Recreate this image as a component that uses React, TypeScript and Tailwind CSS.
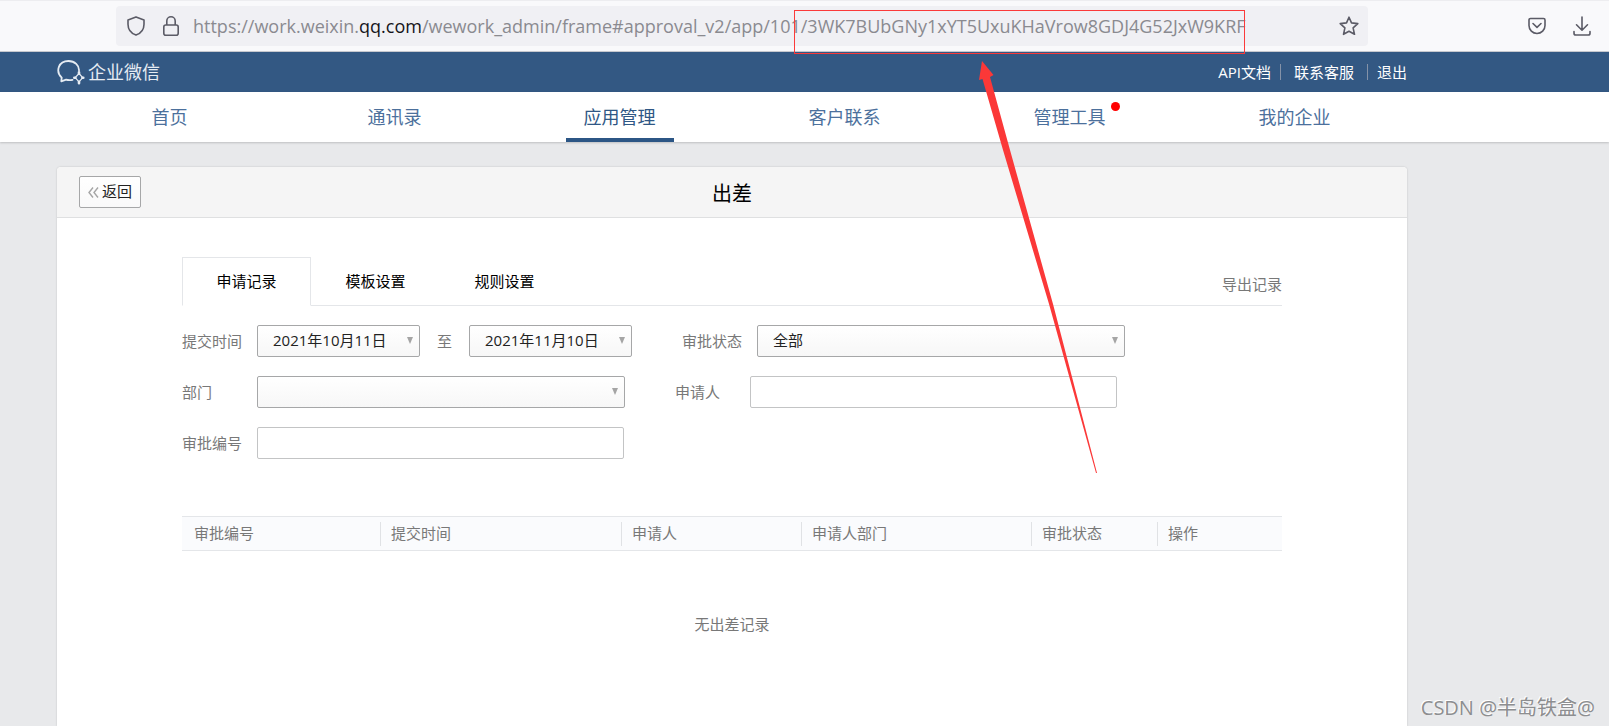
import { useState } from 'react';
import type { ReactNode } from 'react';

interface NavItem {
  label: string;
  active?: boolean;
  dot?: boolean;
}

const NAV_ITEMS: NavItem[] = [
  { label: '首页' },
  { label: '通讯录' },
  { label: '应用管理', active: true },
  { label: '客户联系' },
  { label: '管理工具', dot: true },
  { label: '我的企业' },
];

const TABS = ['申请记录', '模板设置', '规则设置'];

const COLUMNS = [
  { label: '审批编号', width: 'w-[198px]' },
  { label: '提交时间', width: 'w-[241px]' },
  { label: '申请人', width: 'w-[180px]' },
  { label: '申请人部门', width: 'w-[230px]' },
  { label: '审批状态', width: 'w-[126px]' },
  { label: '操作', width: '' },
];

function BrowserBar() {
  return (
    <div className="flex h-[52px] items-center border-t border-b border-t-[#ededf0] border-b-[#c6c8ce] bg-[#f9f9fb] pr-[18px] pl-[116px] text-[#5b5b66]">
      <div className="flex h-10 min-w-0 flex-1 items-center rounded bg-[#f0f0f4] pr-[9px] pl-[11px]">
        <svg className="h-5 w-[18px] shrink-0" viewBox="0 0 18 20" fill="none" stroke="currentColor" strokeWidth="1.6" strokeLinejoin="round">
          <path d="M9 .9 17 3.900v4.300c0 4.600-2.800 9-8 10.900-5.200-1.900-8-6.300-8-10.900V3.900z" />
        </svg>
        <svg className="ml-[18px] h-5 w-4 shrink-0" viewBox="0 0 16 20" fill="none" stroke="currentColor" strokeWidth="1.6">
          <rect x=".8" y="9" width="14.400" height="10.200" rx="2" />
          <path d="M3.800 9V5a4.200 4.200 0 0 1 8.400 0v4" />
        </svg>
        <div
          role="textbox"
          aria-label="地址"
          tabIndex={0}
          className="ml-[14px] min-w-0 flex-1 text-[18px] leading-8 whitespace-nowrap text-[#8a8a90]"
        >
          https://work.weixin.<span className="text-[#15141a]">qq.com</span>
          /wework_admin/frame#approval_v2/app/101/3WK7BUbGNy1xYT5UxuKHaVrow8GDJ4G52JxW9KRF
        </div>
        <button type="button" aria-label="收藏">
          <svg className="h-5 w-5" viewBox="0 0 20 20" fill="none" stroke="currentColor" strokeWidth="1.6" strokeLinejoin="round">
            <path d="m10 1.200 2.500 5.700 6.300.7-4.700 4.200 1.400 6.500L10 15.200l-5.500 3.100 1.400-6.500L1.200 7.600l6.300-.7z" />
          </svg>
        </button>
      </div>
      <button type="button" aria-label="Pocket" className="ml-40">
        <svg className="h-[18px] w-[18px]" viewBox="0 0 18 18" fill="none" stroke="currentColor" strokeWidth="1.6" strokeLinecap="round" strokeLinejoin="round">
          <path d="M2.500 1.500h13a1.500 1.500 0 0 1 1.500 1.500v5.500a8 8 0 0 1-16 0V3a1.500 1.500 0 0 1 1.500-1.500z" />
          <path d="m5 6.500 4 3.800 4-3.800" />
        </svg>
      </button>
      <button type="button" aria-label="下载" className="ml-[27px]">
        <svg className="h-5 w-[18px]" viewBox="0 0 18 20" fill="none" stroke="currentColor" strokeWidth="1.6" strokeLinecap="round" strokeLinejoin="round">
          <path d="M9 1v13M3.500 8.800 9 14.200l5.500-5.400M1 15.500v1.700A1.800 1.800 0 0 0 2.800 19h12.400a1.800 1.800 0 0 0 1.800-1.800v-1.700" />
        </svg>
      </button>
    </div>
  );
}

function Logo() {
  return (
    <a href="#home" className="flex items-center text-[#e6ecf3]">
      <svg className="h-[26px] w-7" viewBox="0 0 28 26" fill="none" stroke="currentColor" strokeLinejoin="round" strokeLinecap="round">
        <path d="M15.500 20.800c-2 .5-4.300.5-6.400-.1L4.300 22.300l.4-3.700C-1.800 12.300 1.500 2 11.500 2c6.300 0 10.800 4.300 10.500 9.500" strokeWidth="1.800" />
        <path d="m22 14.500 3.700 4.200-3.700 4.200-3.800-4.200z" strokeWidth="1.200" />
        <path d="M22 13.300v1.500M26.300 18.700h-.9M22 22.800v1.500M17.300 18.700h1.100" strokeWidth="2.600" />
      </svg>
      <span className="ml-[3px] text-[18px] leading-6">企业微信</span>
    </a>
  );
}

function TopBar() {
  return (
    <header className="flex h-10 items-center justify-between bg-[#335883] pr-[202px] pl-[57px]">
      <Logo />
      <nav className="flex items-center text-[15px] leading-5 text-white">
        <a href="#api">API文档</a>
        <span className="ml-[9px] h-4 w-px bg-[#8492a8]" />
        <a href="#service" className="ml-[13px]">联系客服</a>
        <span className="ml-[13px] h-4 w-px bg-[#8492a8]" />
        <a href="#logout" className="ml-[9px]">退出</a>
      </nav>
    </header>
  );
}

function MainNav() {
  return (
    <nav className="grid h-[50px] grid-cols-6 bg-white pr-[202px] pl-[57px] text-[18px] text-[#4c709c] shadow-[0_1px_2px_rgba(0,0,0,0.18)]">
      {NAV_ITEMS.map((item) => (
        <div key={item.label} className="flex justify-center">
          <a
            href={`#${item.label}`}
            className={
              item.active
                ? 'relative flex items-center border-b-4 border-[#2c5685] px-[18px] pt-1 text-[#2f5785]'
                : 'relative flex items-center px-[18px]'
            }
          >
            {item.label}
            {item.dot && <span className="absolute top-[10px] right-1 h-[9px] w-[9px] rounded-full bg-[#ff0000]" />}
          </a>
        </div>
      ))}
    </nav>
  );
}

function Field({ id, label, children }: { id: string; label: string; children: ReactNode }) {
  return (
    <div className="flex items-center">
      <label htmlFor={id} className="w-[75px] shrink-0 text-[#787878]">
        {label}
      </label>
      {children}
    </div>
  );
}

function Dropdown({ id, options, wide, label }: { id: string; options: string[]; wide?: boolean; label?: string }) {
  return (
    <div className={wide ? 'relative w-[368px]' : 'relative w-[163px]'}>
      <select
        id={id}
        aria-label={label}
        className="h-8 w-full appearance-none rounded-[2px] border border-[#a6a7a8] bg-linear-to-b from-white to-[#f7f7f7] pr-5 pb-0.5 pl-[15px] text-[#222]"
      >
        {options.map((option) => (
          <option key={option}>{option}</option>
        ))}
      </select>
      <svg className="pointer-events-none absolute top-3 right-[7px] h-[7px] w-[6px]" viewBox="0 0 6 7">
        <path d="M0 0h6L3 7z" fill="#a5a5a5" />
      </svg>
    </div>
  );
}

function TextField({ id }: { id: string }) {
  return <input id={id} type="text" className="h-8 w-[367px] rounded-[2px] border border-[#c3c4c5] bg-white px-3 text-[#222]" />;
}

function Filters() {
  return (
    <form className="mt-[19px] flex flex-col gap-[19px]">
      <div className="flex items-center gap-[50px]">
        <div className="flex items-center">
          <Field id="start" label="提交时间">
            <Dropdown id="start" options={['2021年10月11日']} />
          </Field>
          <span className="mx-[17px] text-[#787878]">至</span>
          <Dropdown id="end" label="结束时间" options={['2021年11月10日']} />
        </div>
        <Field id="status" label="审批状态">
          <Dropdown id="status" options={['全部']} wide />
        </Field>
      </div>
      <div className="flex items-center gap-[50px]">
        <Field id="department" label="部门">
          <Dropdown id="department" options={['']} wide />
        </Field>
        <Field id="applicant" label="申请人">
          <TextField id="applicant" />
        </Field>
      </div>
      <Field id="number" label="审批编号">
        <TextField id="number" />
      </Field>
    </form>
  );
}

function RecordTable() {
  return (
    <table className="mt-[57px] w-full table-fixed border-collapse text-[#787878]">
      <thead>
        <tr className="border-y border-[#e4e6e9] bg-[#fafbfd]">
          {COLUMNS.map((column, index) => (
            <th key={column.label} className={`${column.width} h-[34px] p-0 text-left font-normal`}>
              <span
                className={
                  index > 0 ? 'block border-l border-[#e0e2e5] pb-0.5 pl-[10px] leading-[22px]' : 'block pb-0.5 pl-3 leading-[22px]'
                }
              >
                {column.label}
              </span>
            </th>
          ))}
        </tr>
      </thead>
      <tbody>
        <tr>
          <td colSpan={COLUMNS.length} className="pt-[63px] text-center leading-5">
            无出差记录
          </td>
        </tr>
      </tbody>
    </table>
  );
}

function Annotation() {
  return (
    <svg className="pointer-events-none absolute top-0 left-0 h-[480px] w-[1260px]" viewBox="0 0 1260 480">
      <rect x="794.500" y="10.500" width="450" height="43" fill="none" stroke="#fb3a3a" />
      <path d="M982 61 993.500 75 990 77 1010 150 1053 304 1097 473 1096 473 1049 304 1003 150 982.500 79 979 80z" fill="#fb3838" />
    </svg>
  );
}

export default function App() {
  const [activeTab, setActiveTab] = useState(TABS[0]);

  return (
    <div className="relative flex min-h-screen flex-col overflow-hidden bg-[#e8e9eb] font-['Open_Sans','Noto_Sans_CJK_SC',sans-serif] text-[15px] leading-5">
      <BrowserBar />
      <TopBar />
      <MainNav />

      <main className="mt-[25px] mr-[202px] ml-[57px] flex-1 rounded-t-[4px] bg-white shadow-[0_0_2px_rgba(0,0,0,0.2)]">
        <div className="grid h-[51px] grid-cols-[1fr_auto_1fr] items-center rounded-t-[4px] border-b border-[#dfe0e1] bg-[#f5f5f5] px-[22px]">
          <button
            type="button"
            className="flex h-8 items-center gap-[3px] justify-self-start rounded-[2px] border border-[#a6a7a8] bg-linear-to-b from-white to-[#f9f9f9] px-2 pb-0.5 text-[#222]"
          >
            <svg className="mt-0.5 h-[11px] w-[11px]" viewBox="0 0 11 11" fill="none" stroke="#a5a5a5" strokeWidth="1.4">
              <path d="M5 .5 1 5.500l4 5M10 .5l-4 5 4 5" />
            </svg>
            返回
          </button>
          <h1 className="pt-[3px] text-[20px] leading-7 text-black">出差</h1>
        </div>

        <div className="px-[125px] pt-[39px]">
          <div className="flex border-b border-[#e4e6e9]">
            {TABS.map((tab) => (
              <button
                key={tab}
                type="button"
                onClick={() => setActiveTab(tab)}
                className={
                  tab === activeTab
                    ? '-mb-px h-[49px] w-[129px] border border-[#e4e6e9] border-b-white bg-white pb-0.5 text-black'
                    : 'h-12 w-[129px] text-black'
                }
              >
                {tab}
              </button>
            ))}
            <a href="#export" className="mt-[17px] ml-auto text-[#787878]">
              导出记录
            </a>
          </div>
          <Filters />
          <RecordTable />
        </div>
      </main>

      <Annotation />
      <div className="absolute right-[14px] bottom-1 text-[20px] leading-7 text-[#8d8e90] [text-shadow:-1px_-1px_0_#fff]">
        CSDN @半岛铁盒@
      </div>
    </div>
  );
}
